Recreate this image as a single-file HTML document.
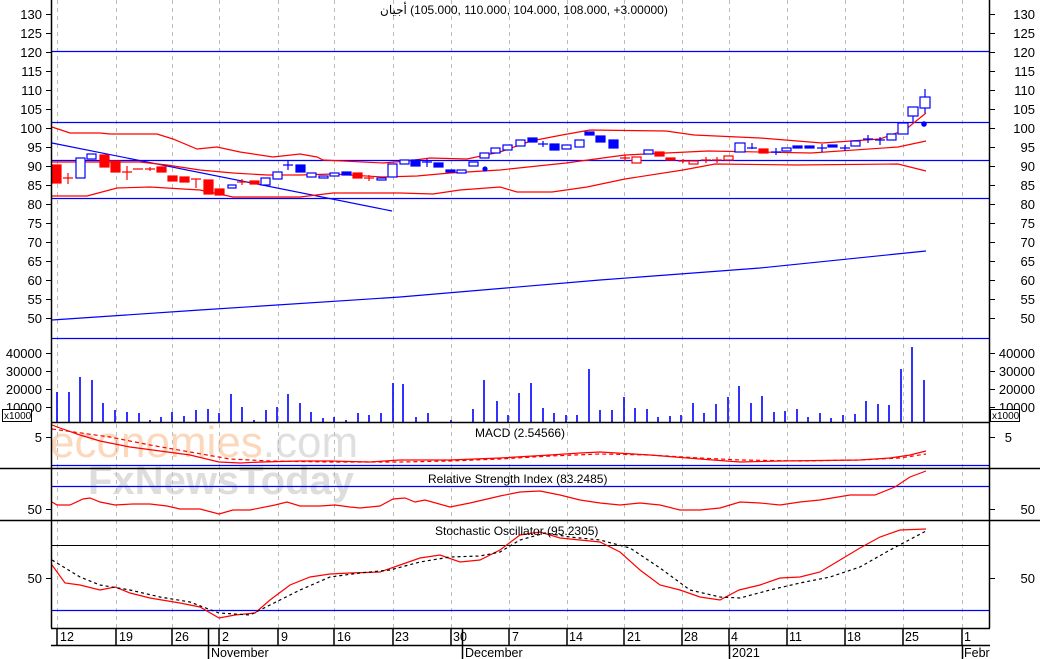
<!DOCTYPE html>
<html><head><meta charset="utf-8"><style>
html,body{margin:0;padding:0;background:#fff;}
body{position:relative;width:1040px;height:659px;overflow:hidden;}
svg{display:block;font-family:"Liberation Sans","Noto Sans CJK SC",sans-serif;}
#title{position:absolute;left:380px;top:3px;font:12px "Liberation Sans","Noto Sans CJK SC",sans-serif;direction:ltr;unicode-bidi:isolate;white-space:nowrap;color:#000;}
</style></head><body>
<svg width="1040" height="659" viewBox="0 0 1040 659" xmlns="http://www.w3.org/2000/svg">
<rect width="1040" height="659" fill="#fff"/>
<text x="50" y="457" font-size="44" fill="#fbd3b4" opacity="0.9">economies<tspan fill="#dcdcdc">.com</tspan></text>
<text x="88" y="494" font-size="40" fill="#d8d8d8" font-weight="bold" opacity="0.85">FxNewsToday</text>
<g stroke="#bbb" stroke-dasharray="4,4" stroke-width="1">
<path d="M57.5 0V628M116.5 0V628M172.5 0V628M219.5 0V628M278.5 0V628M334.5 0V628M393.5 0V628M451.5 0V628M509.5 0V628M567.5 0V628M624.5 0V628M682.5 0V628M729.5 0V628M787.5 0V628M845.5 0V628M903.5 0V628M962.5 0V628"/>
</g>
<g stroke="#0000ff" stroke-width="1.3">
<path d="M52 51.5H989M52 122.5H989M52 160.5H989M52 198.5H989M52 338.5H989"/>
<path d="M52 465.5H989M52 486.5H989M52 610.5H989"/>
</g>
<path d="M52 545.5H989" stroke="#000" stroke-width="1"/>
<path d="M52 143L392 211" stroke="#0000ff" stroke-width="1.2" fill="none"/>
<path d="M52 320L200 310L400 297L600 280L760 268L926 251" stroke="#0000ff" stroke-width="1.2" fill="none"/>
<g stroke="#ff0000" stroke-width="1.2" fill="none">
<path d="M52 127L70 133L100 133L110 134L157 134L173 139L197 149L217 147L240 152L273 157L300 154L317 157L323 160L383 163L407 161L430 158L467 159L500 152L531 141L562 135L590 130L666 131L694 135L760 138L822 143L880 139L905 130L926 113"/>
<path d="M52 162L140 162L167 165L200 170L233 173L267 175L300 175L333 174L383 177L417 176L450 173L500 170L566 163L625 155L708 151L811 153L898 147L926 141"/>
<path d="M52 196L87 196L117 188L150 187L200 190L233 197L300 197L333 193L400 193L433 194L460 190L500 187L517 192L552 192L587 187L625 179L683 170L715 164L797 165L898 164L926 171"/>
</g>
<g stroke-width="1.2">
<g fill="#ff0000" stroke="#ff0000">
<rect x="52" y="165" width="9" height="18"/><path d="M63 178H73M68 173V184" fill="none"/>
<rect x="100" y="155" width="9" height="12"/><rect x="111" y="161" width="9" height="11"/>
<path d="M122 172H132M127 166V180M133 169H143M155 169H145M150 167V171" fill="none"/>
<rect x="157" y="167" width="9" height="5"/><rect x="168" y="176" width="9" height="5"/><rect x="180" y="177" width="9" height="5"/>
<path d="M191 179H201M196 179V188" fill="none"/>
<rect x="204" y="180" width="9" height="14"/><rect x="215" y="189" width="9" height="6"/>
<path d="M237 182H247M242 179V185" fill="none"/>
<rect x="250" y="181" width="9" height="3"/>
<rect x="353" y="173" width="9" height="5"/><path d="M364 178H374M369 175V181" fill="none"/>
<path d="M620 158H630M625 155V161" fill="none"/>
<rect x="632" y="157" width="9" height="6" fill="#fff"/>
<rect x="655" y="152" width="9" height="4"/><rect x="666" y="158" width="9" height="2"/>
<path d="M678 161H688M683 159V163" fill="none"/>
<rect x="689" y="161" width="9" height="3" fill="#fff"/>
<path d="M701 160H711M706 157V163M712 160H722M717 157V163" fill="none"/>
<rect x="724" y="156" width="9" height="4" fill="#fff"/>
<rect x="759" y="149" width="9" height="4"/>
</g>
<g fill="#fff" stroke="#0000ff">
<rect x="76" y="158" width="9" height="20"/><rect x="87" y="154" width="9" height="5"/>
<rect x="228" y="185" width="8" height="3"/>
<rect x="261" y="178" width="9" height="7"/><rect x="273" y="172" width="9" height="7"/>
<path d="M283 165H293M288 161V170" fill="none"/>
<rect x="307" y="173" width="9" height="4"/><rect x="319" y="176" width="9" height="2"/><rect x="330" y="173" width="9" height="3"/>
<rect x="377" y="178" width="9" height="2"/><rect x="388" y="164" width="9" height="13"/><rect x="400" y="160" width="9" height="4"/>
<path d="M422 162H432M427 159V167" fill="none"/>
<rect x="457" y="170" width="9" height="3"/><rect x="469" y="162" width="9" height="4"/>
<rect x="480" y="153" width="9" height="5"/><rect x="491" y="148" width="9" height="5"/>
<rect x="503" y="145" width="9" height="5"/><rect x="516" y="140" width="9" height="6"/>
<path d="M538 144H548M543 141V147" fill="none"/>
<rect x="562" y="145" width="9" height="4"/><rect x="575" y="140" width="9" height="7"/>
<rect x="644" y="150" width="9" height="4"/>
<rect x="735" y="143" width="10" height="9"/>
<path d="M747 148H757M752 143V149M771 152H781M776 148V155" fill="none"/>
<rect x="782" y="148" width="9" height="3"/>
<path d="M817 148H827M822 144V152M840 148H850M845 145V151" fill="none"/>
<rect x="851" y="141" width="9" height="5"/>
<path d="M863 139H873M868 135V143M875 140H885M880 137V145" fill="none"/>
<rect x="887" y="134" width="9" height="6"/>
<rect x="898" y="123" width="10" height="11"/>
<path d="M913 116V122M925 89V97M925 108V113" fill="none"/>
<rect x="908" y="107" width="10" height="9"/>
<rect x="920" y="97" width="10" height="11"/>
</g>
<g fill="#0000ff" stroke="#0000ff">
<rect x="296" y="165" width="9" height="7"/><rect x="342" y="172" width="9" height="3"/>
<rect x="411" y="160" width="9" height="6"/><rect x="434" y="163" width="9" height="4"/><rect x="446" y="170" width="9" height="2"/>
<rect x="528" y="138" width="9" height="4"/><rect x="550" y="144" width="9" height="6"/>
<rect x="585" y="132" width="9" height="3"/><rect x="596" y="136" width="9" height="6"/><rect x="609" y="140" width="9" height="8"/>
<rect x="793" y="146" width="9" height="2"/><rect x="805" y="146" width="9" height="2"/><rect x="828" y="145" width="9" height="2"/>
<circle cx="485" cy="169" r="2"/><circle cx="924" cy="124" r="2.2"/>
</g>
</g>
<g stroke="#0000ff" stroke-width="1.6">
<path d="M57 422V392M69 422V392M80 422V377M92 422V380M103 422V403M115 422V410M127 422V412M139 422V413M150 422V420M161 422V417M172 422V412M184 422V416M196 422V410M208 422V409M219 422V413M231 422V394M242 422V407M254 422V420M266 422V410M277 422V407M288 422V394M300 422V403M311 422V412M323 422V418M334 422V417M346 422V420M358 422V413M369 422V415M381 422V413M393 422V383M403 422V384M416 422V417M428 422V413M451 422V420M473 422V409M484 422V380M497 422V401M508 422V415M519 422V393M531 422V383M543 422V408M554 422V413M566 422V415M577 422V415M589 422V369M600 422V410M612 422V410M624 422V397M635 422V408M647 422V409M658 422V417M670 422V416M681 422V415M693 422V403M704 422V413M716 422V404M728 422V397M739 422V386M751 422V403M762 422V396M774 422V412M785 422V411M797 422V409M808 422V417M820 422V413M831 422V418M843 422V415M855 422V414M866 422V401M878 422V404M889 422V405M901 422V369M912 422V347M924 422V380"/>
</g>
<g fill="none" stroke="#ff0000" stroke-width="1.2">
<path d="M52 425L60 428L80 435L100 441L130 447L160 451L190 455L219 462L240 463L262 462L300 461L330 461L370 462L400 460L450 460L500 458L550 455L580 453L600 452L650 455L700 459L740 462L780 461L860 460L890 458L910 455L926 451"/>
<path d="M52 429L110 437L150 445L190 452L230 459L270 461L330 462L400 462L450 461L500 459L550 456L600 454L650 455L700 458L740 460L800 461L860 460L900 458L926 454" stroke-dasharray="4,3"/>
<path d="M52 502L57 505L70 505L83 499L90 498L100 502L115 505L133 504L150 504L167 506L180 509L200 509L219 514L233 510L250 510L275 505L287 502L300 506L320 506L335 505L350 507L360 508L380 506L393 499L405 498L415 502L425 500L450 507L470 503L500 496L520 492L540 491L560 495L580 500L600 503L620 505L640 503L660 505L680 510L700 510L720 508L740 502L760 503L780 505L800 502L820 500L850 495L875 495L895 487L910 477L926 471"/>
<path d="M52 565L65 583L80 585L100 590L115 587L130 593L150 598L180 603L200 607L219 618L235 615L255 613L270 600L290 585L310 577L330 574L350 573L380 572L400 565L420 558L440 555L460 562L480 560L500 550L520 535L540 532L560 538L580 540L600 542L620 552L640 570L660 585L680 590L700 597L720 600L739 590L760 585L780 578L800 577L820 572L840 560L860 548L880 537L900 530L926 529"/>
</g>
<path d="M52 560L80 577L100 585L130 590L160 597L190 602L219 613L250 615L270 605L300 590L330 577L360 573L390 570L420 562L450 557L480 556L500 552L520 540L545 533L570 537L600 540L630 548L660 568L690 590L720 597L740 598L770 590L800 583L830 577L860 567L890 550L926 531" fill="none" stroke="#000" stroke-width="1.2" stroke-dasharray="3,3"/>
<g stroke="#000" stroke-width="1.5" fill="none">
<path d="M51.5 0V628M989.5 0V628"/>
<path d="M51 422.5H990M0 468.5H1040M0 520.5H1040M51 628.5H990M51 645.5H990"/>
<path d="M57 628V645M116 628V645M172 628V645M219 628V645M278 628V645M334 628V645M393 628V645M451 628V645M509 628V645M567 628V645M624 628V645M682 628V645M729 628V645M787 628V645M845 628V645M903 628V645M962 628V645"/>
<path d="M208.5 628V659M462.5 628V659M729.5 645V659M962.5 645V659"/>
</g>
<g stroke="#000" stroke-width="1">
<path d="M46 14.5H51M46 33.5H51M46 52.5H51M46 71.5H51M46 90.5H51M46 109.5H51M46 128.5H51M46 147.5H51M46 166.5H51M46 185.5H51M46 204.5H51M46 223.5H51M46 242.5H51M46 261.5H51M46 280.5H51M46 299.5H51M46 318.5H51"/>
<path d="M990 14.5H995M990 33.5H995M990 52.5H995M990 71.5H995M990 90.5H995M990 109.5H995M990 128.5H995M990 147.5H995M990 166.5H995M990 185.5H995M990 204.5H995M990 223.5H995M990 242.5H995M990 261.5H995M990 280.5H995M990 299.5H995M990 318.5H995"/>
<path d="M46 353.5H51M46 371.5H51M46 389.5H51M46 407.5H51M990 353.5H995M990 371.5H995M990 389.5H995M990 407.5H995"/>
<path d="M46 437.5H51M990 437.5H995M46 509.5H51M990 509.5H995M46 578.5H51M990 578.5H995"/>
</g>
<g font-size="13" fill="#000">
<g text-anchor="end">
<text x="42" y="19">130</text><text x="42" y="38">125</text><text x="42" y="57">120</text><text x="42" y="76">115</text><text x="42" y="95">110</text><text x="42" y="114">105</text><text x="42" y="133">100</text><text x="42" y="152">95</text><text x="42" y="171">90</text><text x="42" y="190">85</text><text x="42" y="209">80</text><text x="42" y="228">75</text><text x="42" y="247">70</text><text x="42" y="266">65</text><text x="42" y="285">60</text><text x="42" y="304">55</text><text x="42" y="323">50</text>
<text x="42" y="358">40000</text><text x="42" y="376">30000</text><text x="42" y="394">20000</text>
<text x="42" y="442">5</text><text x="42" y="514">50</text><text x="42" y="583">50</text>
</g>
<g text-anchor="end">
<text x="1035" y="19">130</text><text x="1035" y="38">125</text><text x="1035" y="57">120</text><text x="1035" y="76">115</text><text x="1035" y="95">110</text><text x="1035" y="114">105</text><text x="1035" y="133">100</text><text x="1035" y="152">95</text><text x="1035" y="171">90</text><text x="1035" y="190">85</text><text x="1035" y="209">80</text><text x="1035" y="228">75</text><text x="1035" y="247">70</text><text x="1035" y="266">65</text><text x="1035" y="285">60</text><text x="1035" y="304">55</text><text x="1035" y="323">50</text>
<text x="1035" y="358">40000</text><text x="1035" y="376">30000</text><text x="1035" y="394">20000</text>
<text x="1012" y="442">5</text><text x="1035" y="514">50</text><text x="1035" y="583">50</text>
</g>
<text x="42" y="412" text-anchor="end">10000</text>
<text x="1035" y="412" text-anchor="end">10000</text>
<text x="475" y="437" font-size="12">MACD (2.54566)</text>
<text x="428" y="483" font-size="12">Relative Strength Index (83.2485)</text>
<text x="435" y="535" font-size="12">Stochastic Oscillator (95.2305)</text>
<g font-size="12.5">
<text x="60" y="641">12</text><text x="119" y="641">19</text><text x="175" y="641">26</text><text x="222" y="641">2</text><text x="281" y="641">9</text><text x="337" y="641">16</text><text x="395" y="641">23</text><text x="453" y="641">30</text><text x="512" y="641">7</text><text x="569" y="641">14</text><text x="627" y="641">21</text><text x="684" y="641">28</text><text x="731" y="641">4</text><text x="789" y="641">11</text><text x="847" y="641">18</text><text x="905" y="641">25</text><text x="964" y="641">1</text>
<text x="211" y="657">November</text><text x="465" y="657">December</text><text x="732" y="657">2021</text><text x="964" y="657">Febru</text>
</g>
</g>
<rect x="2.5" y="409.5" width="29" height="12" fill="#fff" stroke="#000"/>
<text x="4" y="419" font-size="10">x1000</text>
<rect x="990.5" y="409.5" width="29" height="12" fill="#fff" stroke="#000"/>
<text x="992" y="419" font-size="10">x1000</text>
<rect x="990" y="645" width="50" height="14" fill="#fff"/>
</svg>
<div id="title">أجيان&lrm; (105.000, 110.000, 104.000, 108.000, +3.00000)</div>
</body></html>
